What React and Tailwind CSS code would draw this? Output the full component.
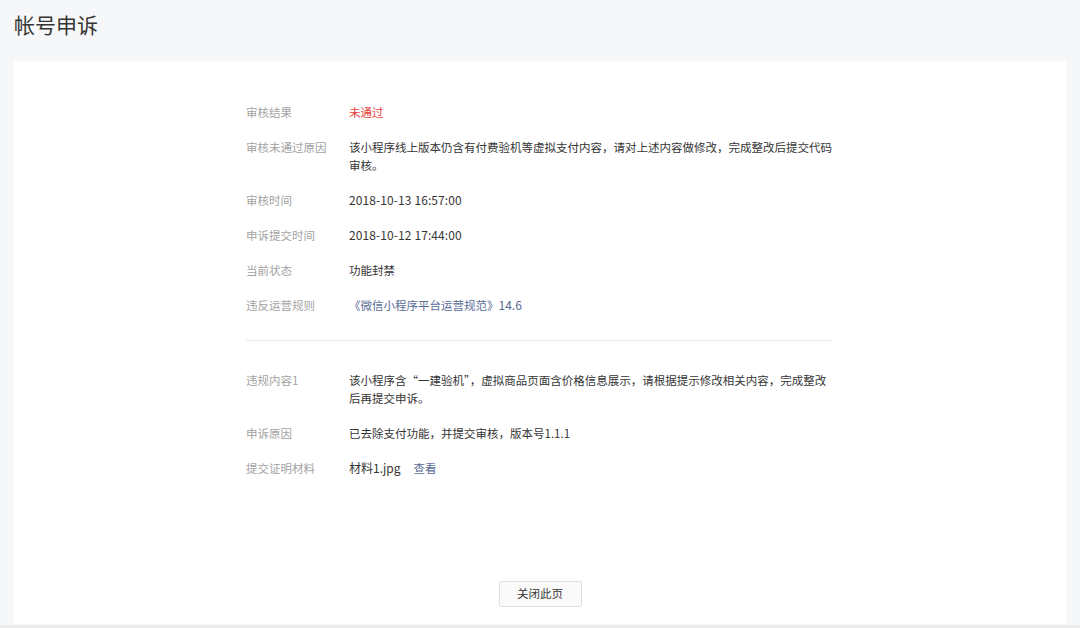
const font = { fontFamily: '"Noto Sans CJK SC", "Noto Sans", sans-serif' };

function Row({ label, children, className = '' }) {
  return (
    <div className={`flex text-[11.5px] leading-[18px] ${className}`}>
      <div className="w-[103px] shrink-0 text-[#a3a3a3]">{label}</div>
      <div className="text-[#353535]">{children}</div>
    </div>
  );
}

export default function App() {
  return (
    <div className="h-[628px] w-[1080px] overflow-hidden bg-[#f6f7f9]" style={font}>
      <div className="px-[14px] pt-[9px] text-[21px] leading-[30px] text-[#353535]">帐号申诉</div>
      <div className="mx-[14px] mt-[22px] flex h-[563px] flex-col bg-white">
        <div className="ml-[232px] mt-[42px] w-[588px]">
          <div className="flex flex-col gap-[17px]">
            <Row label="审核结果"><span className="text-[#e64340]">未通过</span></Row>
            <Row label="审核未通过原因">
              <div className="whitespace-nowrap">该小程序线上版本仍含有付费验机等虚拟支付内容，请对上述内容做修改，完成整改后提交代码</div>
              <div>审核。</div>
            </Row>
            <Row label="审核时间"><span className="text-[12px] tracking-[0.1px]">2018-10-13 16:57:00</span></Row>
            <Row label="申诉提交时间"><span className="text-[12px] tracking-[0.1px]">2018-10-12 17:44:00</span></Row>
            <Row label="当前状态">功能封禁</Row>
            <Row label="违反运营规则"><span className="text-[#576b95]">《微信小程序平台运营规范》<span className="text-[12px]">14.6</span></span></Row>
          </div>
          <div className="mt-[26px] h-px w-[587px] bg-[#e7e7e7]" />
          <div className="mt-[30px] flex flex-col gap-[17px]">
            <Row label="违规内容1">
              <div className="whitespace-nowrap">该小程序含“一建验机”，虚拟商品页面含价格信息展示，请根据提示修改相关内容，完成整改</div>
              <div>后再提交申诉。</div>
            </Row>
            <Row label="申诉原因">已去除支付功能，并提交审核，版本号1.1.1</Row>
            <Row label="提交证明材料">
              <span className="text-[12px]">材料1.jpg</span><span className="ml-[13px] text-[#576b95]">查看</span>
            </Row>
          </div>
        </div>
        <div className="mt-auto mb-[17px] flex justify-center">
          <button className="h-[26px] w-[83px] rounded-[2px] border border-[#e0e0e0] bg-[#fafafa] text-[11.5px] text-[#353535]">关闭此页</button>
        </div>
      </div>
      <div className="mt-px h-[3px] bg-[#ebebeb]" />
    </div>
  );
}
